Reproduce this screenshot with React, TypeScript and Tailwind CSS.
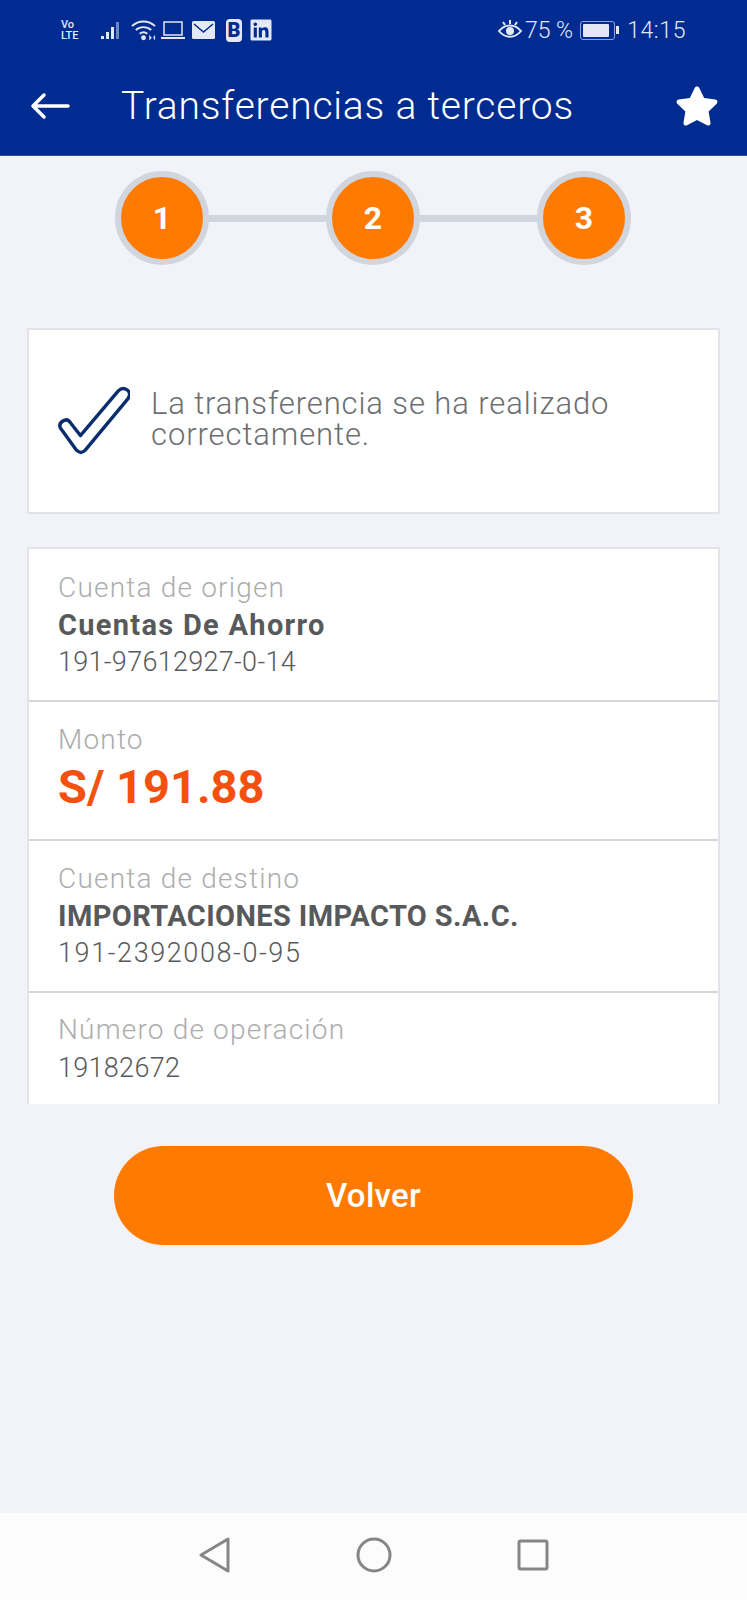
import React from 'react';
import { FaLinkedin, FaStar } from 'react-icons/fa';

const FONT = "font-['Roboto',sans-serif]";

const StatusBar: React.FC = () => (
  <div className="flex h-[56px] items-center justify-between pl-[61px] pr-[61px] pt-1 text-[#e3e8f5]">
    <div className="flex items-center">
      <div className="w-[22px] text-[11px] font-medium leading-[11px]">
        Vo
        <br />
        LTE
      </div>
      <svg className="ml-[18px]" width="24" height="22" viewBox="0 0 24 22">
        <rect x="0" y="17" width="3" height="3" fill="#e3e8f5" />
        <rect x="5" y="13" width="3" height="7" fill="#e3e8f5" />
        <rect x="10" y="8" width="3" height="12" fill="#e3e8f5" />
        <rect x="15" y="3" width="3" height="17" fill="#6d86c4" />
      </svg>
      <svg className="ml-[5px]" width="27" height="24" viewBox="0 0 28 24" fill="none">
        <path d="M2 8c7-6.500 17-6.500 24 0M6 12c4.500-4 11.500-4 16 0M10 16c2.500-2 5.500-2 8 0" stroke="#e3e8f5" strokeWidth="2" />
        <circle cx="14" cy="20" r="2.500" fill="#e3e8f5" />
        <path d="M20 17l2.500 3-2.500 3zM26 17l-2 3 2 3z" fill="#e3e8f5" />
      </svg>
      <svg className="ml-[4px]" width="24" height="20" viewBox="0 0 24 20" fill="none">
        <rect x="3" y="2" width="18" height="13" stroke="#e3e8f5" strokeWidth="1.500" />
        <path d="M0 18h24" stroke="#e3e8f5" strokeWidth="2" />
      </svg>
      <svg className="ml-[7px]" width="23" height="18" viewBox="0 0 23 18">
        <rect width="23" height="18" rx="1.500" fill="#e3e8f5" />
        <path d="M2 3l9.500 8L21 3" fill="none" stroke="#002b91" strokeWidth="1.500" />
      </svg>
      <div className="ml-[11px] flex h-[23px] w-[16px] items-center justify-center rounded-[4px] bg-[#e3e8f5] text-[20px] font-black leading-none text-[#002b91]">
        B
      </div>
      <FaLinkedin className="ml-[7px] text-[24px]" />
    </div>
    <div className="flex items-center text-[23px] font-light leading-none">
      <svg width="26" height="24" viewBox="0 0 26 24" fill="none">
        <path d="M2 13c6-7.500 16-7.500 22 0-6 7.500-16 7.500-22 0z" stroke="#e3e8f5" strokeWidth="2" />
        <circle cx="13" cy="13" r="4" fill="#e3e8f5" />
        <path d="M13 2v4M6 4l2 3M20 4l-2 3" stroke="#e3e8f5" strokeWidth="2" />
      </svg>
      <span className="ml-[2px]">75 %</span>
      <div className="ml-[7px] flex h-[19px] w-[35px] items-center rounded-[3px] border border-[#8fa3d6] p-[2px]">
        <div className="h-full w-[26px] rounded-[1px] bg-[#e3e8f5]" />
      </div>
      <div className="ml-[1px] h-[8px] w-[3px] bg-[#e3e8f5]" />
      <span className="ml-[8px] tracking-[0.6px]">14:15</span>
    </div>
  </div>
);

const AppBar: React.FC = () => (
  <div className="flex h-[100px] items-center justify-between border-b border-[#2a4f9f] pl-[30px] pr-[28px]">
    <div className="flex items-center">
      <svg width="40" height="28" viewBox="0 0 40 28" fill="none">
        <path d="M38 14H3M14 3L3 14l11 11" stroke="#fff" strokeWidth="3.500" strokeLinecap="round" strokeLinejoin="round" />
      </svg>
      <h1 className="ml-[51px] mt-[2px] text-[39px] font-light leading-none tracking-[0.8px] text-white">
        Transferencias a terceros
      </h1>
    </div>
    <FaStar className="text-[44px] text-white" />
  </div>
);

const Step: React.FC<{ n: number }> = ({ n }) => (
  <div className="z-10 flex h-[94px] w-[94px] items-center justify-center rounded-full border-[6px] border-[#d0d5de] bg-[#ff7a00] text-[32px] font-bold text-white">
    {n}
  </div>
);

const Stepper: React.FC = () => (
  <div className="ml-[115px] mr-[116px] mt-[15px] flex items-center">
    <Step n={1} />
    <div className="h-[7px] flex-1 bg-[#d0d5de]" />
    <Step n={2} />
    <div className="h-[7px] flex-1 bg-[#d0d5de]" />
    <Step n={3} />
  </div>
);

const Label: React.FC<{ children: React.ReactNode }> = ({ children }) => (
  <div className="text-[28px] font-light leading-[38px] tracking-[1.2px] text-[#adadad]">{children}</div>
);

const Sub: React.FC<{ children: React.ReactNode }> = ({ children }) => (
  <div className="text-[27px] font-light leading-[38px] tracking-[0.3px] text-[#58595b]">{children}</div>
);

export default function App() {
  return (
    <div className={`flex h-[1600px] w-[747px] flex-col overflow-hidden bg-[#f1f3f8] ${FONT}`}>
      <div className="bg-[#002b91]">
        <StatusBar />
        <AppBar />
      </div>
      <Stepper />

      <div className="mx-[27px] mt-[63px] flex h-[186px] items-center rounded-[2px] border-2 border-[#e1e3e8] bg-white pl-[29px]">
        <svg width="72" height="70" viewBox="0 0 74 72" fill="none">
          <path
            d="M3 44c-2-3-1-6 2-8s6-1 8 2l10 13L62 5c3-3 6-3 9-1s3 6 1 9L28 66c-3 3-6 3-9 0z"
            stroke="#0a2d6e"
            strokeWidth="3.500"
            strokeLinejoin="round"
          />
        </svg>
        <p className="mb-[5px] ml-[21px] text-[31px] font-light leading-[31px] tracking-[0.9px] text-[#6d6e71]">
          La transferencia se ha realizado
          <br />
          correctamente.
        </p>
      </div>

      <div className="mx-[27px] mt-[33px] h-[557px] overflow-hidden rounded-t-[2px] border-x-2 border-t-2 border-[#e1e3e8] bg-white">
        <div className="h-[153px] border-b-2 border-[#d3d5d9] pl-[29px] pt-[20px]">
          <Label>Cuenta de origen</Label>
          <div className="text-[29px] font-bold leading-[36px] tracking-[1.3px] text-[#58595b]">Cuentas De Ahorro</div>
          <Sub>191-97612927-0-14</Sub>
        </div>
        <div className="h-[139px] border-b-2 border-[#d3d5d9] pl-[29px] pt-[19px]">
          <Label>Monto</Label>
          <div className="text-[47px] font-bold leading-[56px] text-[#f4500f]">S/ 191.88</div>
        </div>
        <div className="h-[152px] border-b-2 border-[#d3d5d9] pl-[29px] pt-[19px]">
          <Label>Cuenta de destino</Label>
          <div className="text-[29px] font-bold leading-[36px] tracking-[0.4px] text-[#58595b]">
            IMPORTACIONES IMPACTO S.A.C.
          </div>
          <div className="text-[27px] font-light leading-[38px] tracking-[1.6px] text-[#58595b]">191-2392008-0-95</div>
        </div>
        <div className="pl-[29px] pt-[18px]">
          <Label>Número de operación</Label>
          <Sub>19182672</Sub>
        </div>
      </div>

      <button className="mx-auto mt-[42px] h-[99px] w-[519px] rounded-full bg-[#ff7a00] text-[33px] font-medium tracking-[0.3px] text-white">
        Volver
      </button>

      <div className="mt-auto flex h-[87px] items-center justify-center gap-[125px] bg-[#fcfcfc] pb-[3px]">
        <svg width="32" height="36" viewBox="0 0 32 36" fill="none">
          <path d="M29 2v32L2 18z" stroke="#868686" strokeWidth="3" strokeLinejoin="round" />
        </svg>
        <svg width="36" height="36" viewBox="0 0 36 36" fill="none">
          <circle cx="18" cy="18" r="16" stroke="#868686" strokeWidth="3" />
        </svg>
        <svg width="32" height="32" viewBox="0 0 32 32" fill="none">
          <rect x="2" y="2" width="28" height="28" rx="1.500" stroke="#868686" strokeWidth="3" />
        </svg>
      </div>
    </div>
  );
}
